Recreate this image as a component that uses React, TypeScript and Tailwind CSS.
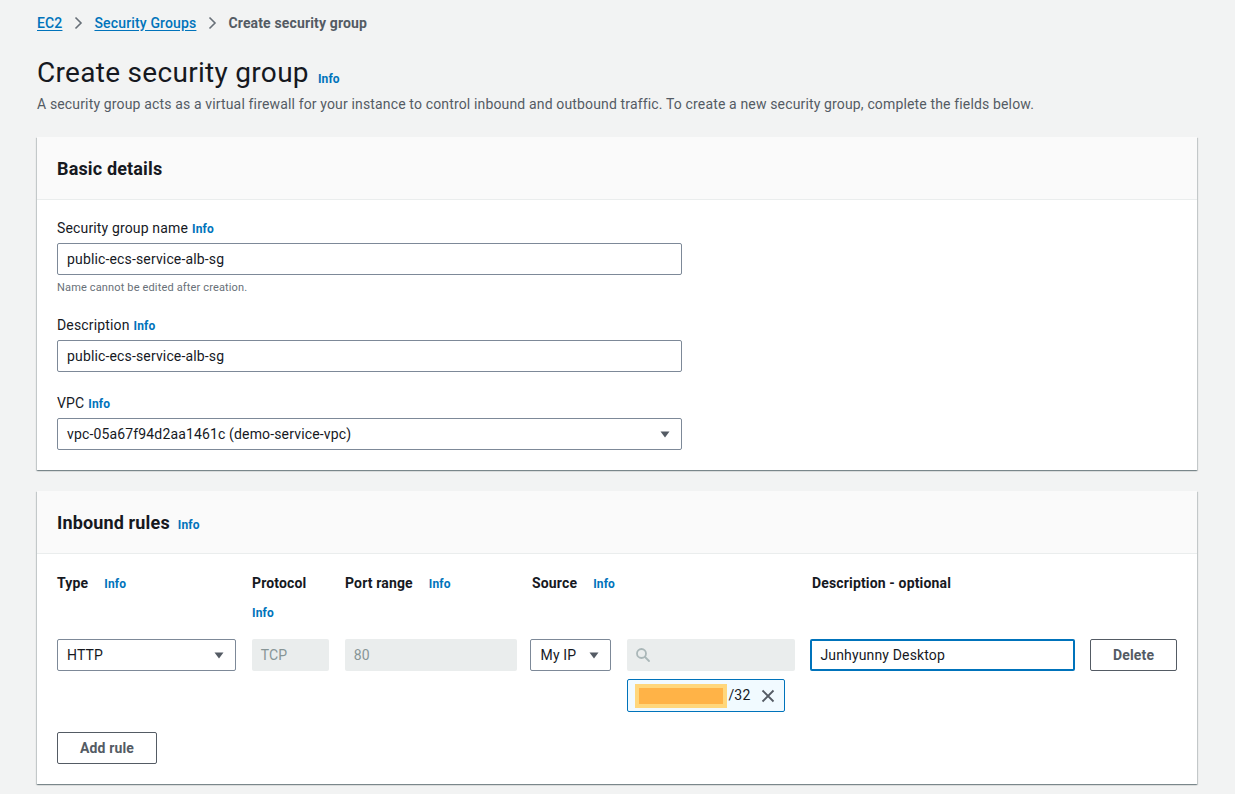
import React from 'react';

const font = { fontFamily: 'Roboto, "Noto Sans", Arial, sans-serif' };

function Info({ className = '' }: { className?: string }) {
  return <span className={`text-[12px] font-bold text-[#0073bb] ${className}`}>Info</span>;
}

function Caret() {
  return (
    <svg width="12" height="12" viewBox="0 0 12 12" className="shrink-0">
      <path d="M1.5 3.5h9L6 9.5z" fill="#545b64" />
    </svg>
  );
}

function Card({ title, children }: { title: React.ReactNode; children: React.ReactNode }) {
  return (
    <section className="bg-white shadow-[0_1px_1px_0_rgba(0,28,36,0.3),1px_1px_1px_0_rgba(0,28,36,0.15),-1px_1px_1px_0_rgba(0,28,36,0.15)]">
      <header className="h-[63px] flex items-center px-5 bg-[#fafafa] border-b border-[#eaeded]">
        {title}
      </header>
      {children}
    </section>
  );
}

function TextBox({ value }: { value: string }) {
  return (
    <div className="w-[625px] h-[32px] flex items-center px-[9px] border border-[#7d8998] rounded-[2px] text-[14px] text-[#16191f]">
      {value}
    </div>
  );
}

export default function App() {
  return (
    <div style={font} className="min-h-[794px] bg-[#f2f3f3] pl-[37px] pr-[38px] pt-[13px] text-[#16191f] tracking-[0.15px]">
      {/* breadcrumb */}
      <nav className="flex items-center h-5 text-[14px] font-medium">
        <span className="text-[#0073bb] underline underline-offset-2">EC2</span>
        <svg width="16" height="16" viewBox="0 0 16 16" className="mx-[8px]">
          <path d="M5.5 2.5l5.5 5.5-5.5 5.5" fill="none" stroke="#687078" strokeWidth="1.6" />
        </svg>
        <span className="text-[#0073bb] underline underline-offset-2">Security Groups</span>
        <svg width="16" height="16" viewBox="0 0 16 16" className="mx-[8px]">
          <path d="M5.5 2.5l5.5 5.5-5.5 5.5" fill="none" stroke="#687078" strokeWidth="1.6" />
        </svg>
        <span className="text-[#545b64] font-bold">Create security group</span>
      </nav>

      <div className="mt-[22px] flex items-baseline gap-[9px]">
        <h1 className="text-[28px] leading-[36px] font-normal tracking-[0.3px]">Create security group</h1>
        <Info className="relative top-[1px]" />
      </div>
      <p className="mt-[3px] text-[14px] leading-5 text-[#545b64]">
        A security group acts as a virtual firewall for your instance to control inbound and outbound traffic. To create a new security group, complete the fields below.
      </p>

      <div className="mt-[23px] flex flex-col gap-[21px]">
        <Card title={<h2 className="text-[18px] font-bold">Basic details</h2>}>
          <div className="px-5 pt-[18px] pb-[20px] text-[14px]">
            <label className="flex items-baseline gap-1 leading-5">
              Security group name <Info />
            </label>
            <div className="mt-[4px]">
              <TextBox value="public-ecs-service-alb-sg" />
            </div>
            <p className="mt-[5px] text-[11px] leading-4 text-[#687078]">Name cannot be edited after creation.</p>

            <label className="mt-[19px] flex items-baseline gap-1 leading-5">
              Description <Info />
            </label>
            <div className="mt-[4px]">
              <TextBox value="public-ecs-service-alb-sg" />
            </div>

            <label className="mt-[21px] flex items-baseline gap-1 leading-5">
              VPC <Info />
            </label>
            <div className="mt-[4px] w-[625px] h-[32px] flex items-center justify-between pl-[9px] pr-[10px] border border-[#7d8998] rounded-[2px]">
              <span>vpc-05a67f94d2aa1461c (demo-service-vpc)</span>
              <Caret />
            </div>
          </div>
        </Card>

        <Card
          title={
            <div className="flex items-baseline gap-[8px]">
              <h2 className="text-[18px] font-bold">Inbound rules</h2>
              <Info />
            </div>
          }
        >
          <div className="px-5 pt-[19px] pb-[20px] text-[14px]">
            {/* column headers */}
            <div className="flex font-bold leading-5 h-[66px]">
              <div className="w-[195px] flex items-baseline">
                <span>Type</span>
                <Info className="ml-4" />
              </div>
              <div className="w-[93px] flex flex-col gap-[10px]">
                <span>Protocol</span>
                <Info />
              </div>
              <div className="w-[187px] flex items-baseline">
                <span>Port range</span>
                <Info className="ml-4" />
              </div>
              <div className="w-[280px] flex items-baseline">
                <span>Source</span>
                <Info className="ml-4" />
              </div>
              <div>Description - optional</div>
            </div>

            {/* rule row */}
            <div className="flex items-start">
              <div className="w-[179px] h-[32px] flex items-center justify-between pl-[9px] pr-[10px] border border-[#7d8998] rounded-[2px] mr-[16px]">
                <span>HTTP</span>
                <Caret />
              </div>
              <div className="w-[77px] h-[32px] flex items-center px-[9px] bg-[#eaeded] text-[#879596] rounded-[2px] mr-[16px]">
                TCP
              </div>
              <div className="w-[172px] h-[32px] flex items-center px-[9px] bg-[#eaeded] text-[#879596] rounded-[2px] mr-[13px]">
                80
              </div>
              <div className="w-[82px] h-[32px] flex items-center justify-between pl-[10px] pr-[10px] border border-[#7d8998] rounded-[2px] mr-[16px]">
                <span>My IP</span>
                <Caret />
              </div>
              <div className="flex flex-col gap-[8px] mr-[15px]">
                <div className="w-[168px] h-[32px] flex items-center px-[8px] bg-[#eaeded] rounded-[2px]">
                  <svg width="16" height="16" viewBox="0 0 16 16">
                    <circle cx="6.5" cy="6.5" r="4.5" fill="none" stroke="#aab7b8" strokeWidth="1.8" />
                    <path d="M10 10l4 4" stroke="#aab7b8" strokeWidth="1.8" strokeLinecap="round" />
                  </svg>
                </div>
                <div className="w-[158px] h-[33px] flex items-center pl-[7px] pr-[8px] border border-[#0073bb] bg-[#f1faff] rounded-[2px]">
                  <div className="w-[92px] h-[24px] bg-[#ffd77c] flex items-center justify-center">
                    <div className="w-[84px] h-[16px] bg-[#ffb347]" />
                  </div>
                  <span className="ml-[1px] text-[14px]">/32</span>
                  <svg width="16" height="16" viewBox="0 0 16 16" className="ml-auto">
                    <path d="M2.5 2.5l11 11M13.5 2.5l-11 11" stroke="#545b64" strokeWidth="1.8" />
                  </svg>
                </div>
              </div>
              <div className="w-[265px] h-[32px] flex items-center px-[8px] border-2 border-[#0073bb] rounded-[2px] mr-[15px]">
                Junhyunny Desktop
              </div>
              <button className="w-[87px] h-[32px] border border-[#545b64] rounded-[2px] font-bold text-[#545b64]">
                Delete
              </button>
            </div>

            <button className="mt-[20px] w-[100px] h-[32px] border border-[#545b64] rounded-[2px] font-bold text-[#545b64]">
              Add rule
            </button>
          </div>
        </Card>
      </div>
    </div>
  );
}
